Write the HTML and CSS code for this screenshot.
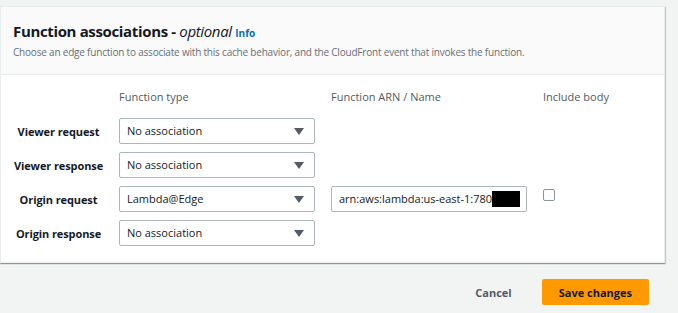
FILE: index.html
```html
<!DOCTYPE html>
<html lang="en">
<head>
  <meta charset="UTF-8">
  <meta name="viewport" content="width=device-width, initial-scale=1.0">
  <title>Function associations</title>
  <link rel="stylesheet" href="styles.css">
</head>
<body>
  <section class="panel">
    <header class="panel-header">
      <h2 class="panel-title">Function associations - <em>optional</em> <a href="#" class="info-link">Info</a></h2>
      <p class="panel-desc">Choose an edge function to associate with this cache behavior, and the CloudFront event that invokes the function.</p>
    </header>

    <div class="assoc-grid">
      <div></div>
      <div class="col-head">Function type</div>
      <div class="col-head">Function ARN / Name</div>
      <div class="col-head">Include body</div>

      <div class="row-label">Viewer request</div>
      <div class="select">No association<span class="caret"></span></div>
      <div></div>
      <div></div>

      <div class="row-label">Viewer response</div>
      <div class="select">No association<span class="caret"></span></div>
      <div></div>
      <div></div>

      <div class="row-label">Origin request</div>
      <div class="select">Lambda@Edge<span class="caret"></span></div>
      <div class="text-input">arn:aws:lambda:us-east-1:780<span class="redacted"></span></div>
      <div class="check-cell"><span class="checkbox"></span></div>

      <div class="row-label">Origin response</div>
      <div class="select">No association<span class="caret"></span></div>
      <div></div>
      <div></div>
    </div>
  </section>

  <footer class="actions">
    <button class="btn-link">Cancel</button>
    <button class="btn-primary">Save changes</button>
  </footer>
</body>
</html>
```

FILE: styles.css
```css
body {
  margin: 0;
  background-color: #f2f3f3;
  font-family: "Open Sans", "Noto Sans", sans-serif;
  color: #16191f;
}

.panel {
  margin: 6px 13px 0 0;
  background-color: #fff;
  border: 1px solid #eaeded;
  box-shadow: 0 1px 1px 0 rgba(0, 28, 36, 0.3), 1px 1px 1px 0 rgba(0, 28, 36, 0.15);
}

.panel-header {
  background-color: #fafafa;
  border-bottom: 1px solid #eaeded;
  padding: 13px 12px 15px;
}

.panel-title {
  margin: 0;
  font-size: 15px;
  line-height: 22px;
  font-weight: 700;
  letter-spacing: -0.35px;
}

.panel-title em {
  font-weight: 400;
}

.info-link {
  font-size: 10px;
  font-weight: 700;
  letter-spacing: 0;
  color: #0073bb;
  text-decoration: none;
}

.panel-desc {
  margin: 1px 0 0;
  font-size: 10px;
  line-height: 14px;
  letter-spacing: -0.2px;
  color: #687078;
}

.assoc-grid {
  display: grid;
  grid-template-columns: 118px 212px 212px 1fr;
  grid-template-rows: 21px repeat(4, 26px);
  row-gap: 8px;
  align-items: center;
  padding: 14px 0 16px;
}

.col-head {
  font-size: 11px;
  line-height: 15px;
  color: #545b64;
  align-self: start;
}

.row-label {
  padding-right: 3px;
  text-align: center;
  font-size: 11px;
  font-weight: 700;
  letter-spacing: -0.1px;
}

.select,
.text-input {
  position: relative;
  box-sizing: border-box;
  width: 196px;
  height: 26px;
  padding: 0 7px;
  border: 1px solid #aab7b8;
  border-radius: 2px;
  font-size: 11px;
  line-height: 24px;
  white-space: nowrap;
  overflow: hidden;
}

.caret {
  position: absolute;
  right: 10px;
  top: 9px;
  border-left: 5px solid transparent;
  border-right: 5px solid transparent;
  border-top: 7px solid #545b64;
}

.redacted {
  display: inline-block;
  width: 28px;
  height: 16px;
  vertical-align: -4px;
  background-color: #000;
}

.check-cell {
  align-self: start;
  padding-top: 3px;
}

.checkbox {
  display: block;
  width: 10px;
  height: 10px;
  border: 1px solid #879596;
  border-radius: 2px;
}

.actions {
  display: flex;
  justify-content: flex-end;
  align-items: center;
  gap: 10px;
  padding: 16px 29px 0 0;
}

.btn-link,
.btn-primary {
  font-family: inherit;
  font-size: 11px;
  font-weight: 700;
  border: none;
  border-radius: 2px;
  height: 26px;
  cursor: pointer;
}

.btn-link {
  background: none;
  color: #545b64;
  padding: 0 20px;
}

.btn-primary {
  background-color: #ff9900;
  color: #16191f;
  padding: 0 17px;
}
```
